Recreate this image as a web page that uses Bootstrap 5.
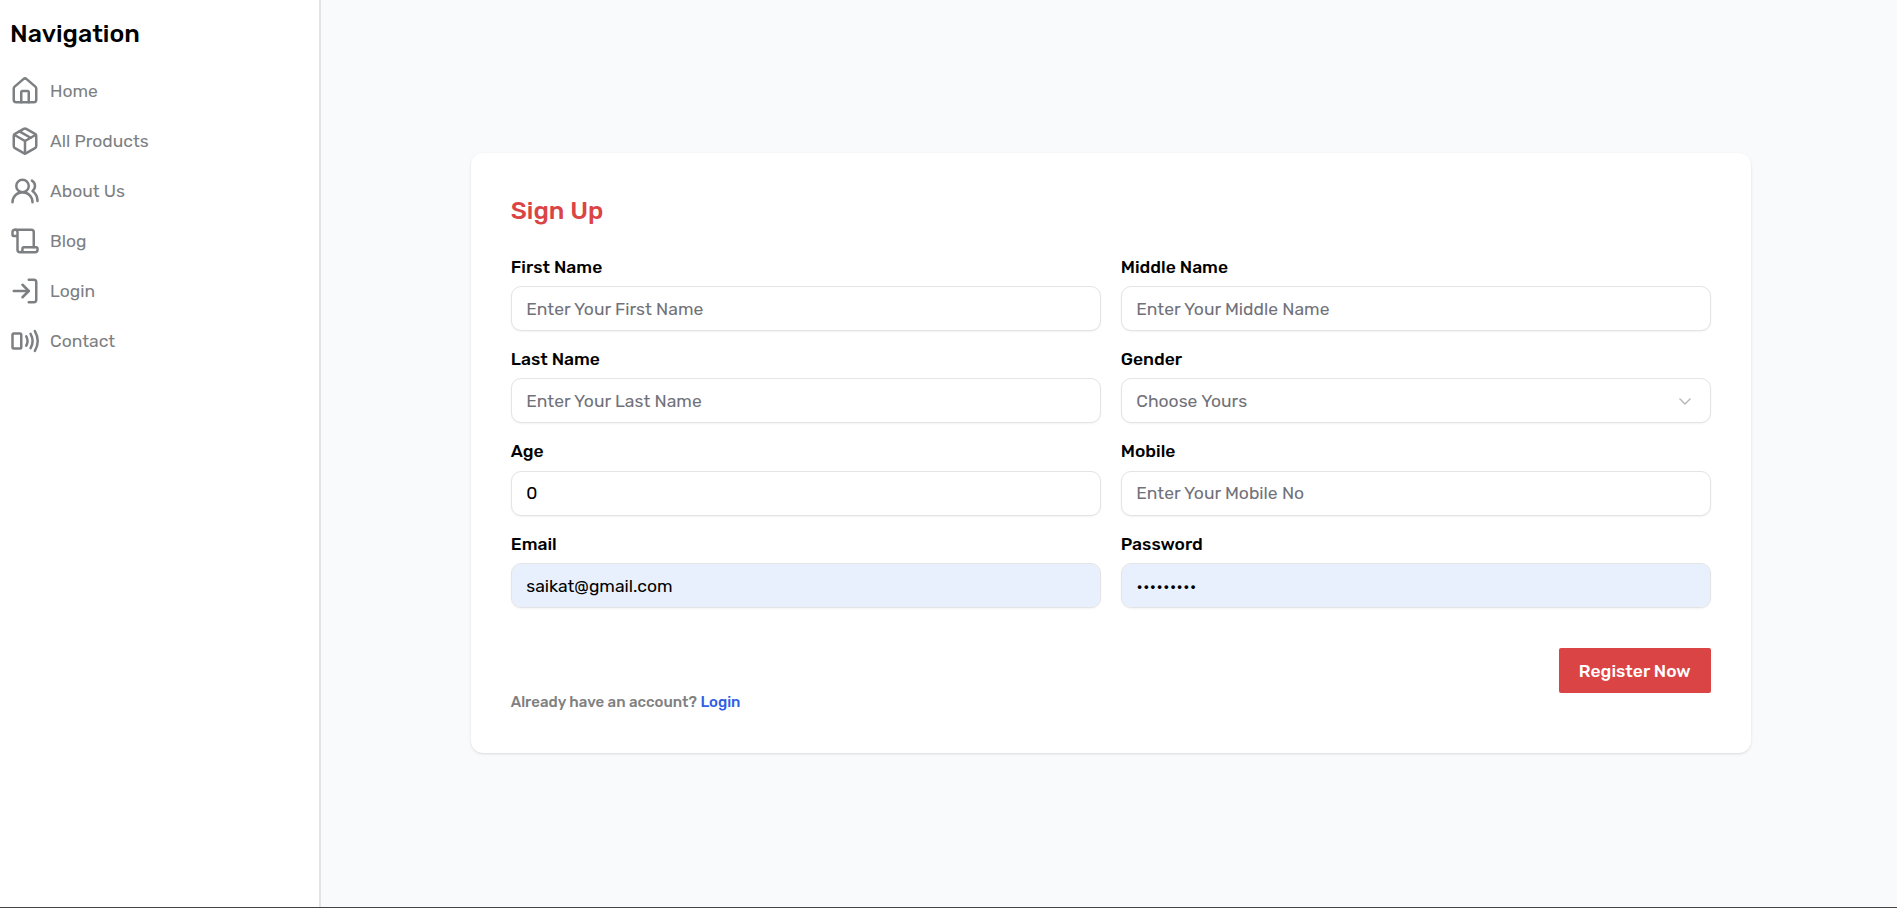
<!DOCTYPE html>
<html lang="en">
<head>
<meta charset="utf-8">
<meta name="viewport" content="width=device-width, initial-scale=1">
<title>Sign Up</title>
<link href="https://cdn.jsdelivr.net/npm/bootstrap@5.3.0/dist/css/bootstrap.min.css" rel="stylesheet">
<style>
body{font-family:Rubik,Roboto,sans-serif;font-size:17.5px;color:#000;background:#f8fafc;line-height:24px}
.page-shell{height:100vh;border-bottom:1px solid #444}
.side-panel{width:321px;border-right:2px solid #e2e3e5;padding:18px 10px}
.side-title{font-size:25px;line-height:32px;font-weight:500;margin-bottom:26px}
.side-link{color:#7d8083;gap:10px;height:30px}
.side-links{gap:20px}
.side-link svg{width:30px;height:30px;fill:none;stroke:currentColor;stroke-width:2;stroke-linecap:round;stroke-linejoin:round}
.main-area{padding:0 0 1px 3.5px}
.signup-card{width:1280px;height:600px;border:0;border-radius:12px;padding:40px;box-shadow:0 1px 3px rgba(0,0,0,.1),0 1px 2px -1px rgba(0,0,0,.1)}
.signup-title{color:#db4444;font-size:25px;line-height:36px;font-weight:500;margin-bottom:24.5px}
.fields{display:grid;grid-template-columns:1fr 1fr;column-gap:20px;row-gap:14.9px}
.field-label{font-weight:500;line-height:26px;margin-bottom:6.5px;display:block}
.field-box,.field-box:focus{height:45px;font-size:17.5px;border:1px solid #e4e4e7;border-radius:10px;padding:0 14.5px;color:#000;background-color:#fff;box-shadow:0 1px 2px rgba(0,0,0,.05)}
.field-box::placeholder{color:#71717a;opacity:1}
.filled-box,.filled-box:focus{background-color:#e8f0fe}
.pick,.pick:focus{color:#71717a}
.pick svg{width:16px;height:16px;fill:none;stroke:#b4b5b9;stroke-width:1.3;margin-right:2px}
.register-btn{width:152px;height:45px;font-size:17.5px;border-radius:2px;background:#db4444;color:#fff;font-weight:500;margin-top:40px;border:0;padding:0}
.have-account{font-size:15px;line-height:20px;font-weight:500;color:#808080;margin-top:-1px}
.have-account a{color:#2f5fe6;text-decoration:none}
</style>
</head>
<body>
<div class="page-shell d-flex">
  <aside class="side-panel bg-white flex-shrink-0">
    <h1 class="side-title">Navigation</h1>
    <nav class="side-links d-flex flex-column">
      <a class="side-link d-flex align-items-center text-decoration-none" href="#"><svg viewBox="0 0 24 24"><path d="M15 21v-8a1 1 0 0 0-1-1h-4a1 1 0 0 0-1 1v8"/><path d="M3 10a2 2 0 0 1 .709-1.528l7-6a2 2 0 0 1 2.582 0l7 6A2 2 0 0 1 21 10v9a2 2 0 0 1-2 2H5a2 2 0 0 1-2-2z"/></svg><span>Home</span></a>
      <a class="side-link d-flex align-items-center text-decoration-none" href="#"><svg viewBox="0 0 24 24"><path d="m7.5 4.27 9 5.15"/><path d="M21 8a2 2 0 0 0-1-1.73l-7-4a2 2 0 0 0-2 0l-7 4A2 2 0 0 0 3 8v8a2 2 0 0 0 1 1.73l7 4a2 2 0 0 0 2 0l7-4A2 2 0 0 0 21 16Z"/><path d="m3.3 7 8.7 5 8.7-5"/><path d="M12 22V12"/></svg><span>All Products</span></a>
      <a class="side-link d-flex align-items-center text-decoration-none" href="#"><svg viewBox="0 0 24 24"><path d="M18 21a8 8 0 0 0-16 0"/><circle cx="10" cy="8" r="5"/><path d="M22 20c0-3.37-2-6.5-4-8a5 5 0 0 0-.45-8.3"/></svg><span>About Us</span></a>
      <a class="side-link d-flex align-items-center text-decoration-none" href="#"><svg viewBox="0 0 24 24"><path d="M19 17V5a2 2 0 0 0-2-2H4"/><path d="M8 21h12a2 2 0 0 0 2-2v-1a1 1 0 0 0-1-1H11a1 1 0 0 0-1 1v1a2 2 0 1 1-4 0V5a2 2 0 1 0-4 0v2a1 1 0 0 0 1 1h3"/></svg><span>Blog</span></a>
      <a class="side-link d-flex align-items-center text-decoration-none" href="#"><svg viewBox="0 0 24 24"><path d="M15 3h4a2 2 0 0 1 2 2v14a2 2 0 0 1-2 2h-4"/><path d="m10 17 5-5-5-5"/><path d="M15 12H3"/></svg><span>Login</span></a>
      <a class="side-link d-flex align-items-center text-decoration-none" href="#"><svg viewBox="0 0 24 24"><rect x="2" y="6" width="7" height="12" rx="1"/><path d="M13 8.32a7.43 7.43 0 0 1 0 7.36"/><path d="M16.46 6.21a11.76 11.76 0 0 1 0 11.58"/><path d="M19.91 4.1a15.91 15.91 0 0 1 .01 15.8"/></svg><span>Contact</span></a>
    </nav>
  </aside>
  <main class="main-area flex-grow-1 d-flex align-items-center justify-content-center">
    <form class="signup-card card" autocomplete="off">
      <h2 class="signup-title">Sign Up</h2>
      <div class="fields">
        <div><label class="field-label" for="first">First Name</label><input class="form-control field-box" id="first" placeholder="Enter Your First Name"></div>
        <div><label class="field-label" for="middle">Middle Name</label><input class="form-control field-box" id="middle" placeholder="Enter Your Middle Name"></div>
        <div><label class="field-label" for="last">Last Name</label><input class="form-control field-box" id="last" placeholder="Enter Your Last Name"></div>
        <div><span class="field-label">Gender</span><div class="form-control field-box pick d-flex align-items-center justify-content-between"><span>Choose Yours</span><svg viewBox="0 0 16 16"><path d="m2.5 5.5 5.5 5.5 5.5-5.5"/></svg></div></div>
        <div><label class="field-label" for="age">Age</label><input class="form-control field-box" id="age" value="0"></div>
        <div><label class="field-label" for="mobile">Mobile</label><input class="form-control field-box" id="mobile" placeholder="Enter Your Mobile No"></div>
        <div><label class="field-label" for="email">Email</label><input class="form-control field-box filled-box" id="email" value="saikat@gmail.com"></div>
        <div><label class="field-label" for="password">Password</label><input class="form-control field-box filled-box" id="password" type="password" value="password1"></div>
      </div>
      <button class="register-btn btn align-self-end" type="button">Register Now</button>
      <p class="have-account mb-0">Already have an account? <a href="#">Login</a></p>
    </form>
  </main>
</div>
<script src="https://cdn.jsdelivr.net/npm/bootstrap@5.3.0/dist/js/bootstrap.bundle.min.js"></script>
</body>
</html>
